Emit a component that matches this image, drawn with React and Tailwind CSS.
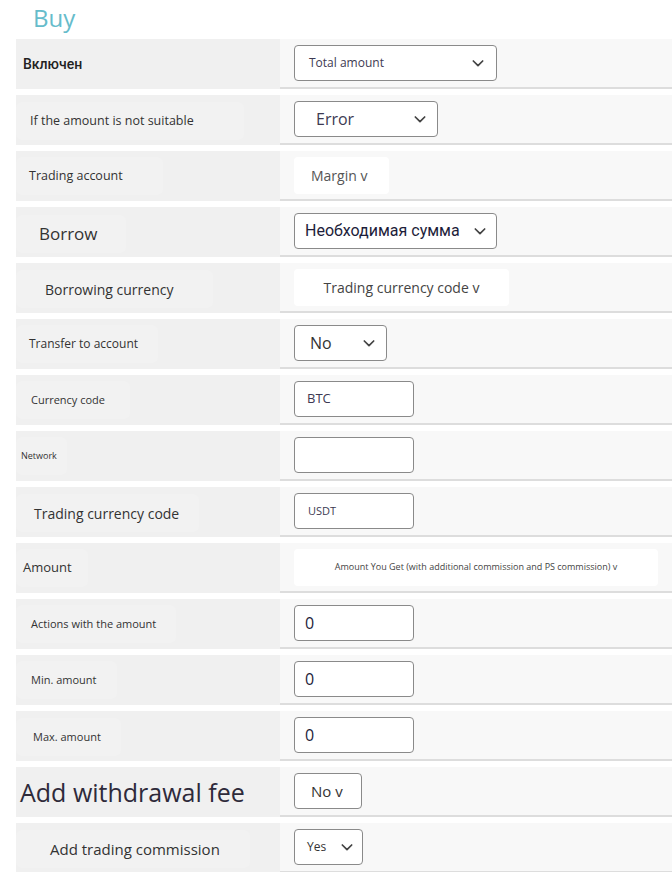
import React from "react";

const Chevron = ({ className = "" }) => (
  <svg viewBox="0 0 24 24" className={className} fill="none" stroke="#444" strokeWidth="2.6" strokeLinecap="round" strokeLinejoin="round">
    <path d="M5 9l7 7 7-7" />
  </svg>
);

const Row = ({ label, children }) => (
  <div className="flex h-[50px]">
    <div className="w-[264px] shrink-0 bg-[#f0f0f0] flex items-center">{label}</div>
    <div className="flex-1 bg-[#f8f8f8] border-b-2 border-[#dddddd] flex items-center pl-[14px]">{children}</div>
  </div>
);

const Label = ({ cls, text, pad }) => (
  <div className={`flex items-center h-[38px] rounded-md bg-[#f2f2f2] ${pad}`}>
    <span className={cls}>{text}</span>
  </div>
);

const boxBorder = "border border-[#8a8a8a] rounded-[4px] bg-white";

export default function App() {
  return (
    <div className="w-[672px] h-[872px] overflow-hidden bg-white" style={{ fontFamily: '"Open Sans", "Noto Sans", sans-serif' }}>
      <div className="h-[39px] pl-[33px] flex items-start">
        <span className="text-[24px] leading-[36px] text-[#66bccb]">Buy</span>
      </div>
      <div className="flex flex-col gap-[6px] pl-[16px]">
        <Row label={<span className="pl-[7px] text-[14px] text-[#222] mt-[1px]" style={{ fontFamily: "Roboto, sans-serif", fontWeight: 500 }}>Включен</span>}>
          <div className={`${boxBorder} w-[203px] h-[36px] flex items-center justify-between pl-[14px] pr-[10px]`}>
            <span className="text-[12px] text-[#3d3a52]">Total amount</span>
            <Chevron className="w-[16px] h-[16px]" />
          </div>
        </Row>
        <Row label={<Label pad="pl-[14px] pr-[50px] mt-[2px]" cls="text-[12.5px] text-[#333]" text="If the amount is not suitable" />}>
          <div className={`${boxBorder} w-[144px] h-[36px] flex items-center justify-between pl-[21px] pr-[9px]`}>
            <span className="text-[16px] text-[#3d3a52]">Error</span>
            <Chevron className="w-[16px] h-[16px]" />
          </div>
        </Row>
        <Row label={<Label pad="pl-[13px] pr-[40px]" cls="text-[12.5px] text-[#333]" text="Trading account" />}>
          <div className="bg-white rounded-[4px] w-[95px] h-[37px] flex items-center pl-[17px]">
            <span className="text-[14px] text-[#555]">Margin v</span>
          </div>
        </Row>
        <Row label={<Label pad="pl-[23px] pr-[28px] mt-[3px]" cls="text-[17px] text-[#333]" text="Borrow" />}>
          <div className={`${boxBorder} w-[203px] h-[36px] flex items-center justify-between pl-[10px] pr-[8px]`}>
            <span className="text-[16px] text-[#1d1d3a]" style={{ fontFamily: "Roboto, sans-serif" }}>Необходимая сумма</span>
            <Chevron className="w-[16px] h-[16px]" />
          </div>
        </Row>
        <Row label={<Label pad="pl-[29px] pr-[40px] mt-[2px]" cls="text-[14px] text-[#333]" text="Borrowing currency" />}>
          <div className="bg-white rounded-[4px] w-[215px] h-[37px] flex items-center justify-center">
            <span className="text-[14px] text-[#444]">Trading currency code v</span>
          </div>
        </Row>
        <Row label={<Label pad="pl-[13px] pr-[20px]" cls="text-[12px] text-[#333]" text="Transfer to account" />}>
          <div className={`${boxBorder} w-[93px] h-[36px] flex items-center justify-between pl-[15px] pr-[9px]`}>
            <span className="text-[16px] text-[#333]">No</span>
            <Chevron className="w-[16px] h-[16px]" />
          </div>
        </Row>
        <Row label={<Label pad="pl-[15px] pr-[25px]" cls="text-[11px] text-[#333]" text="Currency code" />}>
          <div className={`${boxBorder} w-[120px] h-[36px] flex items-center pl-[12px]`}>
            <span className="text-[13px] font-medium text-[#3d3a52]">BTC</span>
          </div>
        </Row>
        <Row label={<Label pad="pl-[5px] pr-[10px]" cls="text-[9px] text-[#333]" text="Network" />}>
          <div className={`${boxBorder} w-[120px] h-[36px]`} />
        </Row>
        <Row label={<Label pad="pl-[18px] pr-[20px] mt-[2px]" cls="text-[14px] text-[#333]" text="Trading currency code" />}>
          <div className={`${boxBorder} w-[120px] h-[36px] flex items-center pl-[13px]`}>
            <span className="text-[11px] text-[#3d3a52]">USDT</span>
          </div>
        </Row>
        <Row label={<Label pad="pl-[7px] pr-[16px]" cls="text-[13px] text-[#333]" text="Amount" />}>
          <div className="bg-white rounded-[4px] w-[364px] h-[37px] flex items-center justify-center">
            <span className="text-[9px] text-[#444]">Amount You Get (with additional commission and PS commission) v</span>
          </div>
        </Row>
        <Row label={<Label pad="pl-[15px] pr-[20px]" cls="text-[11px] text-[#333]" text="Actions with the amount" />}>
          <div className={`${boxBorder} w-[120px] h-[36px] flex items-center pl-[10px]`}>
            <span className="text-[16px] text-[#1d1d3a]">0</span>
          </div>
        </Row>
        <Row label={<Label pad="pl-[15px] pr-[20px]" cls="text-[11px] text-[#333]" text="Min. amount" />}>
          <div className={`${boxBorder} w-[120px] h-[36px] flex items-center pl-[10px]`}>
            <span className="text-[16px] text-[#1d1d3a]">0</span>
          </div>
        </Row>
        <Row label={<Label pad="pl-[17px] pr-[20px] mt-[2px]" cls="text-[11px] text-[#333]" text="Max. amount" />}>
          <div className={`${boxBorder} w-[120px] h-[36px] flex items-center pl-[10px]`}>
            <span className="text-[16px] text-[#1d1d3a]">0</span>
          </div>
        </Row>
        <Row label={<span className="pl-[4px] text-[25px] text-[#2e2a3a] mt-[2px]">Add withdrawal fee</span>}>
          <div className={`${boxBorder} w-[68px] h-[36px] flex items-center pl-[16px]`}>
            <span className="text-[15px] text-[#333]">No v</span>
          </div>
        </Row>
        <Row label={<Label pad="pl-[34px] pr-[30px] mt-[2px]" cls="text-[15px] text-[#333]" text="Add trading commission" />}>
          <div className={`${boxBorder} w-[69px] h-[36px] flex items-center justify-between pl-[12px] pr-[7px]`}>
            <span className="text-[12px] text-[#333]">Yes</span>
            <Chevron className="w-[16px] h-[16px]" />
          </div>
        </Row>
      </div>
    </div>
  );
}
